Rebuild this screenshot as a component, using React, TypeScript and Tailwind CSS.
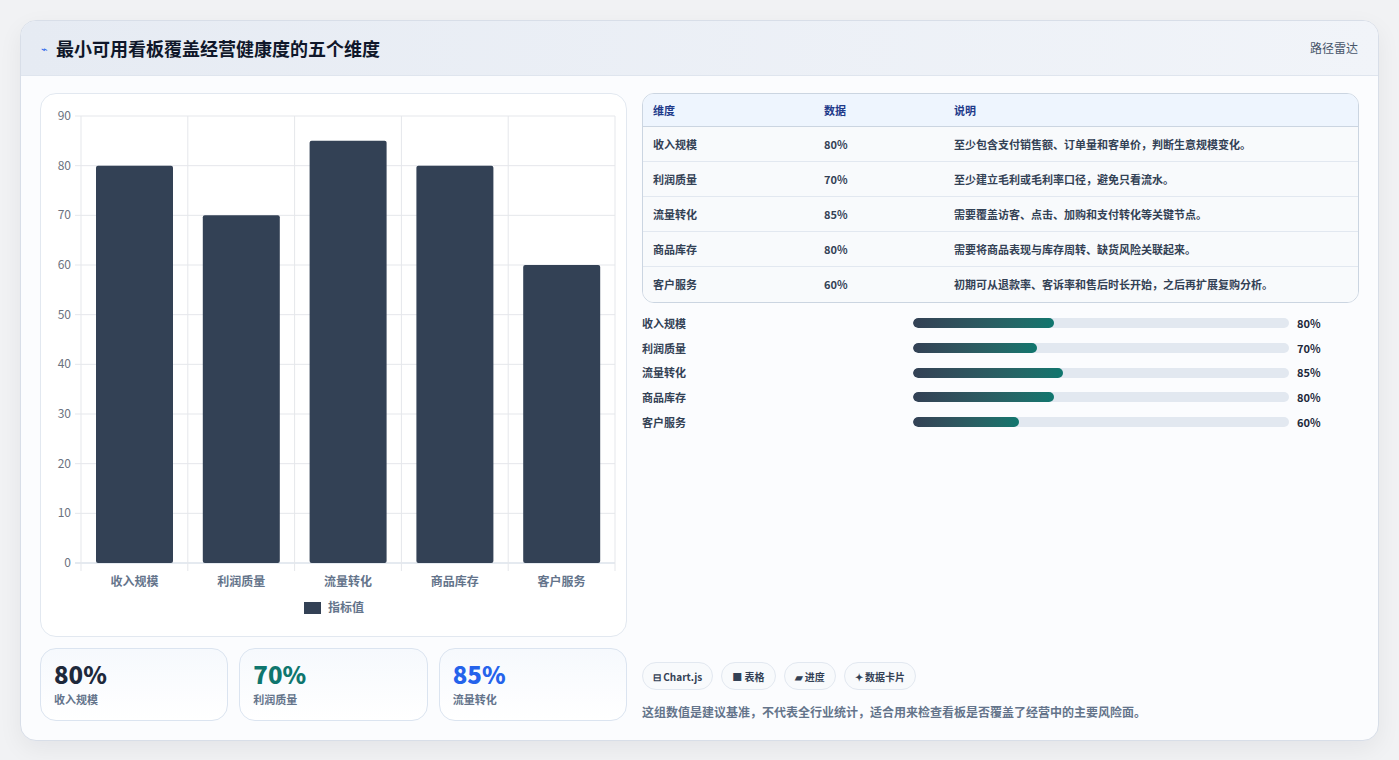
import React from 'react';

const DIMS = [
  { name: '收入规模', v: 80, desc: '至少包含支付销售额、订单量和客单价，判断生意规模变化。' },
  { name: '利润质量', v: 70, desc: '至少建立毛利或毛利率口径，避免只看流水。' },
  { name: '流量转化', v: 85, desc: '需要覆盖访客、点击、加购和支付转化等关键节点。' },
  { name: '商品库存', v: 80, desc: '需要将商品表现与库存周转、缺货风险关联起来。' },
  { name: '客户服务', v: 60, desc: '初期可从退款率、客诉率和售后时长开始，之后再扩展复购分析。' },
];

const FONT = { fontFamily: '"Noto Sans CJK SC", "Noto Sans", sans-serif' };

function BarChart() {
  const left = 40, right = 574, top = 22, bottom = 469;
  const cw = (right - left) / 5;
  const y = (v: number) => bottom - (v / 90) * (bottom - top);
  return (
    <svg width="586" height="541" viewBox="0 0 586 541" className="block">
      {[0, 10, 20, 30, 40, 50, 60, 70, 80, 90].map((t) => (
        <g key={t}>
          <line x1={left - 6} x2={right} y1={y(t)} y2={y(t)} stroke={t === 0 ? '#cbd5e1' : '#e5e7eb'} />
          <text x={left - 10} y={y(t) + 4} textAnchor="end" fontSize="12" fill="#6b7280" style={FONT}>{t}</text>
        </g>
      ))}
      {[0, 1, 2, 3, 4, 5].map((i) => (
        <line key={i} x1={left + i * cw} x2={left + i * cw} y1={top} y2={bottom + 8} stroke="#e5e7eb" />
      ))}
      {DIMS.map((d, i) => (
        <g key={d.name}>
          <rect x={left + i * cw + 15} y={y(d.v)} width={77} height={bottom - y(d.v)} rx="2" fill="#334155" />
          <text x={left + i * cw + cw / 2} y={492} textAnchor="middle" fontSize="12" fontWeight="600" fill="#64748b" style={FONT}>{d.name}</text>
        </g>
      ))}
      <rect x={263} y={508} width={17} height={12} fill="#334155" />
      <text x={287} y={518} fontSize="12" fontWeight="600" fill="#64748b" style={FONT}>指标值</text>
    </svg>
  );
}

export default function App() {
  return (
    <div className="min-h-[760px] bg-[#f1f2f4] p-5" style={FONT}>
      <div className="rounded-2xl border border-[#d8dee8] bg-[#fbfcfe] shadow-[0_8px_24px_rgba(15,23,42,0.06)] overflow-hidden">
        <div className="h-[55px] flex items-center justify-between px-5 border-b border-[#dfe5ee] bg-gradient-to-r from-[#e6ebf3] to-[#f1f4f9]">
          <div className="flex items-center gap-2">
            <span className="text-[#2563eb] text-[11px]">⌁</span>
            <h1 className="text-[18px] font-bold text-[#0f172a]">最小可用看板覆盖经营健康度的五个维度</h1>
          </div>
          <span className="text-[12px] text-[#475569]">路径雷达</span>
        </div>
        <div className="flex gap-[15px] px-[19px] pt-[17px] pb-[19px]">
          <div className="w-[587px] shrink-0 flex flex-col gap-[11px]">
            <div className="rounded-2xl border border-[#e2e8f0] bg-white h-[544px]">
              <BarChart />
            </div>
            <div className="grid grid-cols-3 gap-[11px]">
              {[
                { v: '80%', l: '收入规模', c: 'text-[#1e293b]' },
                { v: '70%', l: '利润质量', c: 'text-[#0f766e]' },
                { v: '85%', l: '流量转化', c: 'text-[#2563eb]' },
              ].map((s) => (
                <div key={s.l} className="h-[73px] rounded-2xl border border-[#dbe4f0] bg-gradient-to-b from-[#f6f9fd] to-white px-[13px] pt-[10px]">
                  <div className={`text-[24px] font-extrabold leading-[30px] ${s.c}`}>{s.v}</div>
                  <div className="text-[11px] font-semibold text-[#64748b] mt-[2px]">{s.l}</div>
                </div>
              ))}
            </div>
          </div>
          <div className="flex-1 flex flex-col">
            <div className="rounded-xl border border-[#cbd5e1] overflow-hidden text-[11px] font-semibold">
              <div className="grid grid-cols-[171px_130px_1fr] h-[33px] items-center px-[10px] bg-[#eef5fe] text-[#1e3a8a] border-b border-[#cbd5e1]">
                <span>维度</span><span>数据</span><span>说明</span>
              </div>
              {DIMS.map((d, i) => (
                <div key={d.name} className={`grid grid-cols-[171px_130px_1fr] h-[35px] items-center px-[10px] bg-[#f8fafc] text-[#334155] ${i < 4 ? 'border-b border-[#e2e8f0]' : ''}`}>
                  <span>{d.name}</span><span>{d.v}%</span><span>{d.desc}</span>
                </div>
              ))}
            </div>
            <div className="flex flex-col mt-[8px]">
              {DIMS.map((d) => (
                <div key={d.name} className="flex items-center h-[24.7px] text-[11px] font-semibold">
                  <span className="w-[271px] text-[#334155]">{d.name}</span>
                  <div className="w-[376px] h-[10px] rounded-full bg-[#e2e8f0] overflow-hidden">
                    <div className="h-full rounded-full bg-gradient-to-r from-[#334155] to-[#0f766e]" style={{ width: `${d.v * 0.47}%` }} />
                  </div>
                  <span className="ml-[8px] font-bold text-[#1e293b]">{d.v}%</span>
                </div>
              ))}
            </div>
            <div className="flex-1" />
            <div className="flex gap-[8px]">
              {['⊟ Chart.js', '■ 表格', '▰ 进度', '✦ 数据卡片'].map((c) => (
                <span key={c} className="h-[28px] px-[10px] flex items-center rounded-full border border-[#e2e8f0] bg-[#f8fafc] text-[10px] font-bold text-[#334155]">{c}</span>
              ))}
            </div>
            <p className="mt-[13px] text-[12px] font-semibold text-[#64748b]">这组数值是建议基准，不代表全行业统计，适合用来检查看板是否覆盖了经营中的主要风险面。</p>
          </div>
        </div>
      </div>
    </div>
  );
}
